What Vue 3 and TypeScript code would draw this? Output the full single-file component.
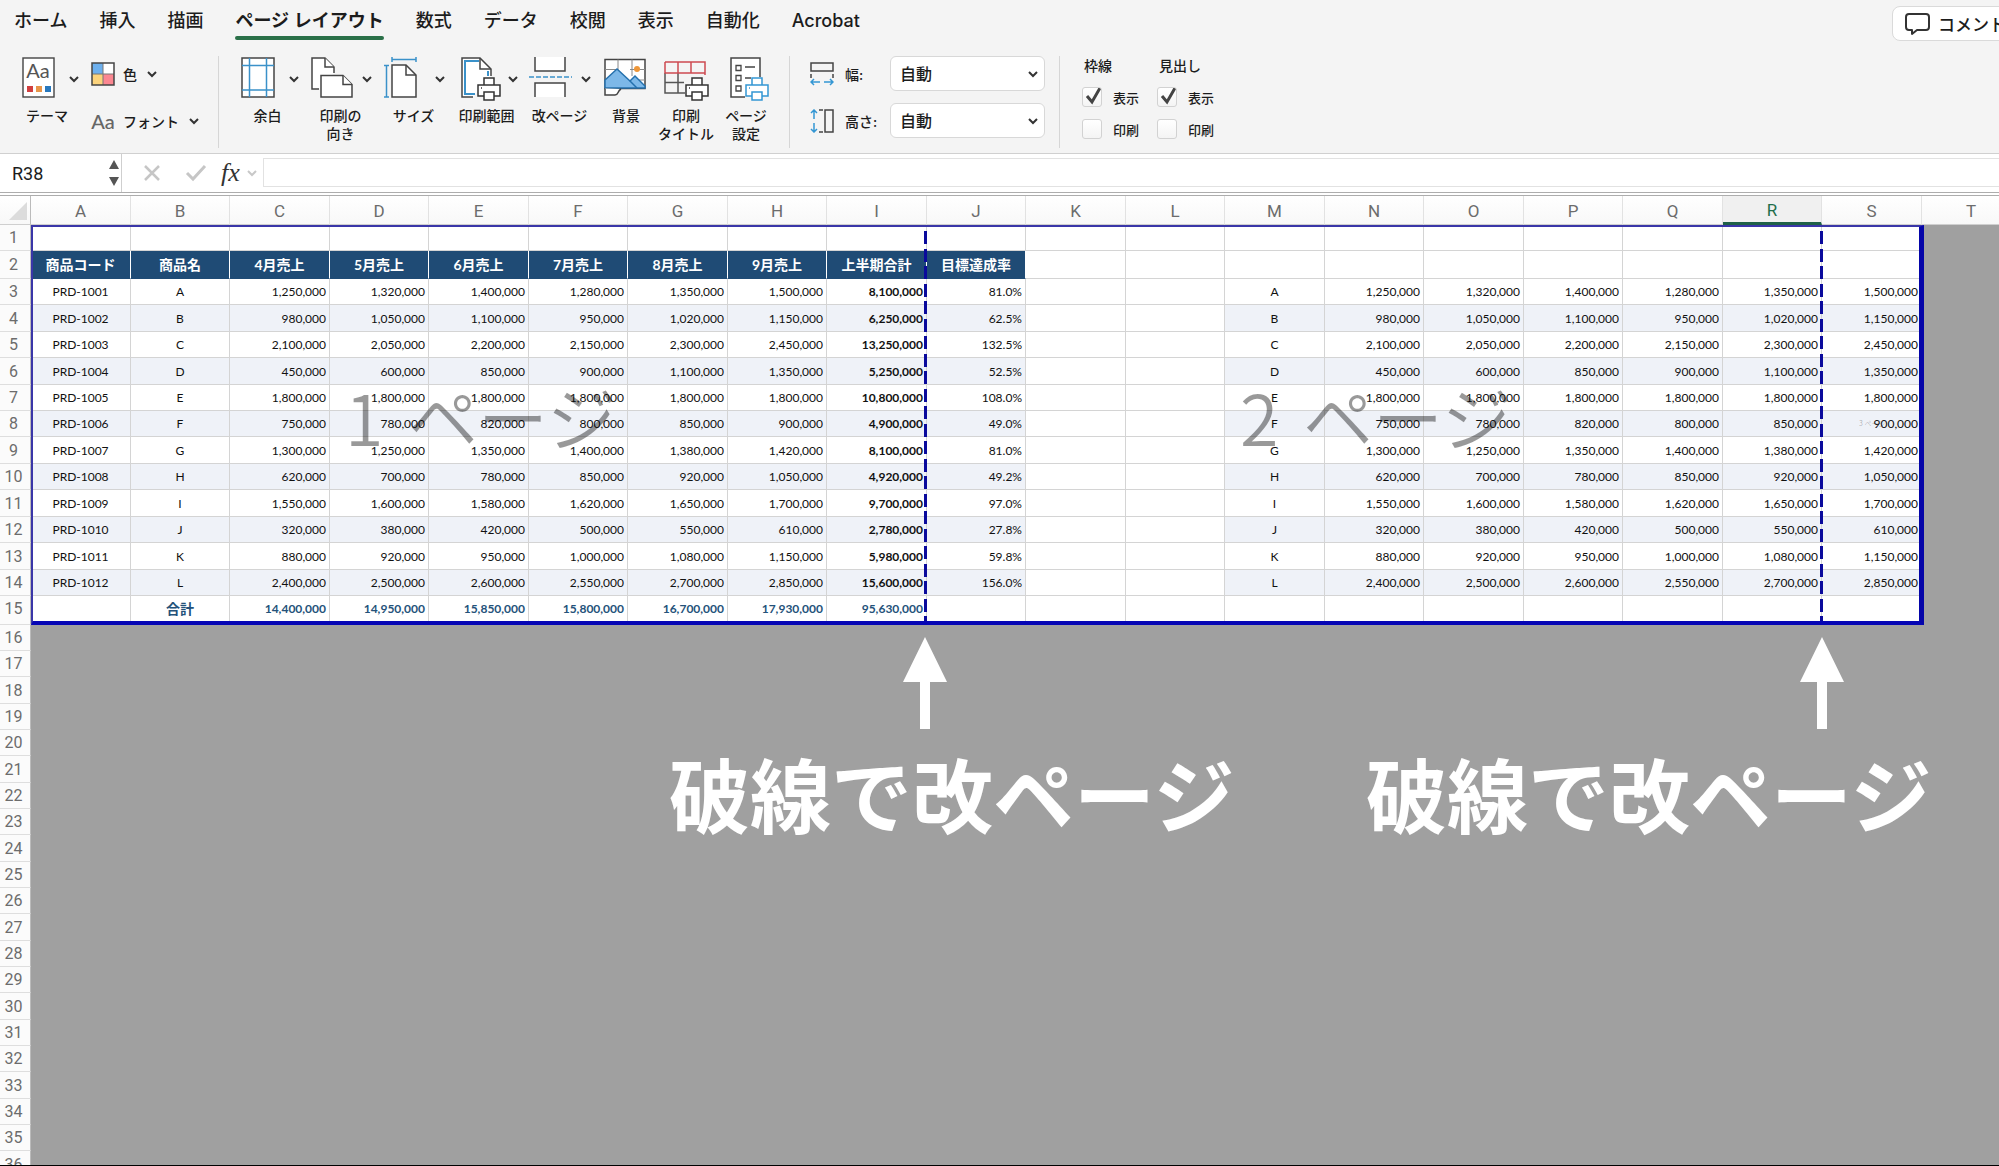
<script setup lang="ts">
import { ref } from 'vue'

interface Product {
  code: string
  name: string
  months: number[]
  total: number
  rate: string
}

interface Cell {
  text: string
  kind: string
}

const tabs = ['ホーム', '挿入', '描画', 'ページ レイアウト', '数式', 'データ', '校閲', '表示', '自動化', 'Acrobat']
const activeTab = ref('ページ レイアウト')

const columns = 'ABCDEFGHIJKLMNOPQRST'.split('')
const selectedColumn = 'R'

const headings = ['商品コード', '商品名', '4月売上', '5月売上', '6月売上', '7月売上', '8月売上', '9月売上', '上半期合計', '目標達成率']

// Monthly sales in units of 10,000
const source: [string, number[], number, string][] = [
  ['A', [125, 132, 140, 128, 135, 150], 810, '81.0%'],
  ['B', [98, 105, 110, 95, 102, 115], 625, '62.5%'],
  ['C', [210, 205, 220, 215, 230, 245], 1325, '132.5%'],
  ['D', [45, 60, 85, 90, 110, 135], 525, '52.5%'],
  ['E', [180, 180, 180, 180, 180, 180], 1080, '108.0%'],
  ['F', [75, 78, 82, 80, 85, 90], 490, '49.0%'],
  ['G', [130, 125, 135, 140, 138, 142], 810, '81.0%'],
  ['H', [62, 70, 78, 85, 92, 105], 492, '49.2%'],
  ['I', [155, 160, 158, 162, 165, 170], 970, '97.0%'],
  ['J', [32, 38, 42, 50, 55, 61], 278, '27.8%'],
  ['K', [88, 92, 95, 100, 108, 115], 598, '59.8%'],
  ['L', [240, 250, 260, 255, 270, 285], 1560, '156.0%'],
]

const products: Product[] = source.map(([name, months, total, rate], i) => ({
  code: `PRD-${1001 + i}`,
  name,
  months,
  total,
  rate,
}))

const totals = [1440, 1495, 1585, 1580, 1670, 1793, 9563]

const yen = (n: number): string => (n * 10000).toLocaleString('en-US')
const blank = (count: number): Cell[] => Array.from({ length: count }, () => ({ text: '', kind: '' }))

function productCells(p: Product, banded: boolean): Cell[] {
  const band = banded ? ' band' : ''
  const months = p.months.map((m) => ({ text: yen(m), kind: 'num' + band }))
  return [
    { text: p.code, kind: 'mid' + band },
    { text: p.name, kind: 'mid' + band },
    ...months,
    { text: yen(p.total), kind: 'num strong' + band },
    { text: p.rate, kind: 'num' + band },
    ...blank(2),
    { text: p.name, kind: 'mid' + band },
    ...months,
  ]
}

const printRows: Cell[][] = [
  blank(19),
  [...headings.map((text) => ({ text, kind: 'heading' })), ...blank(9)],
  ...products.map((p, i) => productCells(p, i % 2 === 1)),
  [
    ...blank(1),
    { text: '合計', kind: 'mid sum' },
    ...totals.map((t) => ({ text: yen(t), kind: 'num sum' })),
    ...blank(10),
  ],
]

const outerRows = Array.from({ length: 21 }, (_, i) => i + 16)

const widthMode = ref('自動')
const heightMode = ref('自動')
const gridView = ref(true)
const gridPrint = ref(false)
const headView = ref(true)
const headPrint = ref(false)
const formula = ref('')
</script>

<template>
  <div class="app">
    <header class="ribbon">
      <nav class="tabs">
        <button
          v-for="tab in tabs"
          :key="tab"
          type="button"
          class="tab"
          :class="{ active: tab === activeTab }"
          @click="activeTab = tab"
        >{{ tab }}</button>
        <button type="button" class="comment">
          <svg width="26" height="24" viewBox="0 0 26 24" fill="none" stroke="#333" stroke-width="2" stroke-linejoin="round">
            <path d="M4 2h17a3 3 0 0 1 3 3v10a3 3 0 0 1-3 3h-9l-5 4v-4H4a3 3 0 0 1-3-3V5a3 3 0 0 1 3-3z" />
          </svg>
          コメント
        </button>
      </nav>

      <div class="tools">
        <section class="group themes">
          <button type="button" class="theme">
            <span class="pic">
              <svg width="34" height="46" viewBox="0 0 34 46">
                <rect x="2" y="2" width="31" height="39" fill="#fff" stroke="#444" stroke-width="1.4" />
                <text x="17" y="22" text-anchor="middle" font-family="Lato, sans-serif" font-size="20" fill="#555">Aa</text>
                <rect x="6" y="30" width="6" height="6" fill="#d13f3f" />
                <rect x="15" y="30" width="6" height="6" fill="#e8964a" />
                <rect x="24" y="30" width="6" height="6" fill="#2878bd" />
              </svg>
              <svg class="chev" width="14" height="14" viewBox="0 0 14 14"><path d="M3 5l4 4 4-4" /></svg>
            </span>
            <span class="caption">テーマ</span>
          </button>
          <div class="stack">
            <button type="button" class="inline">
              <svg width="24" height="24" viewBox="0 0 24 24">
                <rect x="1" y="1" width="11" height="11" fill="#6db0ee" />
                <rect x="12" y="1" width="11" height="11" fill="#fff" />
                <rect x="1" y="12" width="11" height="11" fill="#fbd37c" />
                <rect x="12" y="12" width="11" height="11" fill="#fb8791" />
                <path d="M12 1v22M1 12h22" stroke="#777" />
                <rect x="1" y="1" width="22" height="22" fill="none" stroke="#444" stroke-width="1.5" />
              </svg>
              <span>色</span>
              <svg class="chev" width="14" height="14" viewBox="0 0 14 14"><path d="M3 5l4 4 4-4" /></svg>
            </button>
            <button type="button" class="inline">
              <span class="aa">Aa</span>
              <span>フォント</span>
              <svg class="chev" width="14" height="14" viewBox="0 0 14 14"><path d="M3 5l4 4 4-4" /></svg>
            </button>
          </div>
        </section>

        <section class="group page">
          <button type="button" class="tool">
            <span class="pic">
              <svg width="48" height="46" viewBox="0 0 48 46" fill="none">
                <rect x="8" y="2" width="32" height="39" fill="#fff" stroke="#444" stroke-width="1.5" />
                <path d="M15.500 2v39M32.500 2v39M8 9.500h32M8 34h32" stroke="#3a91c9" stroke-width="1.500" />
              </svg>
              <svg class="chev" width="14" height="14" viewBox="0 0 14 14"><path d="M3 5l4 4 4-4" /></svg>
            </span>
            <span class="caption">余白</span>
          </button>
          <button type="button" class="tool">
            <span class="pic">
              <svg width="48" height="46" viewBox="0 0 48 46" fill="#fff" stroke="#444" stroke-width="1.5">
                <path d="M12 33H5V2h13l9 9v6" />
                <path d="M18 2v9h9" />
                <path d="M14 19.500h22l9 9V41H14z" />
                <path d="M36 19.500v9h9" />
              </svg>
              <svg class="chev" width="14" height="14" viewBox="0 0 14 14"><path d="M3 5l4 4 4-4" /></svg>
            </span>
            <span class="caption">印刷の<br>向き</span>
          </button>
          <button type="button" class="tool">
            <span class="pic">
              <svg width="48" height="46" viewBox="0 0 48 46" fill="none" stroke-width="1.5">
                <path d="M12 9h14l10 10v22H12z" fill="#fff" stroke="#444" />
                <path d="M26 9v10h10" stroke="#444" />
                <path d="M12 1v5M36 1v5M12 3.500h24M4 9.500h5M4 41h5M6.500 9.500V41" stroke="#3a91c9" />
              </svg>
              <svg class="chev" width="14" height="14" viewBox="0 0 14 14"><path d="M3 5l4 4 4-4" /></svg>
            </span>
            <span class="caption">サイズ</span>
          </button>
          <button type="button" class="tool">
            <span class="pic">
              <svg width="48" height="46" viewBox="0 0 48 46" fill="none" stroke-width="1.5">
                <path d="M20 41H9V2h18l11 11v7" fill="#fff" stroke="#444" />
                <path d="M22 38H12V5h14M35 15v5" stroke="#3a91c9" stroke-width="2" />
                <path d="M27 2v11h11" stroke="#444" />
                <g fill="#fff" stroke="#333">
                  <path d="M31 29v-7h10v7M25 29h22v11H25z" />
                  <path d="M31 36h10v8H31z" />
                </g>
                <path d="M28 32h1" stroke="#333" />
              </svg>
              <svg class="chev" width="14" height="14" viewBox="0 0 14 14"><path d="M3 5l4 4 4-4" /></svg>
            </span>
            <span class="caption">印刷範囲</span>
          </button>
          <button type="button" class="tool">
            <span class="pic">
              <svg width="48" height="46" viewBox="0 0 48 46" fill="#fff" stroke="#444" stroke-width="1.5">
                <path d="M9 1v14h30V1M9 41V27h30v14" />
                <path d="M3 21h43" stroke="#3a91c9" stroke-dasharray="5 2" />
              </svg>
              <svg class="chev" width="14" height="14" viewBox="0 0 14 14"><path d="M3 5l4 4 4-4" /></svg>
            </span>
            <span class="caption">改ページ</span>
          </button>
          <button type="button" class="tool narrow">
            <span class="pic">
              <svg width="46" height="46" viewBox="0 0 46 46" fill="none" stroke="#444" stroke-width="1.5">
                <path d="M2 3.500h40v29H2z" fill="#fff" />
                <path d="M15 3.500V15M29 3.500V20M2 13.500h13M27 13.500h15M2 24h7M36 24h6" stroke="#888" stroke-width="1" />
                <circle cx="34" cy="13" r="3" fill="#ee9638" stroke="none" />
                <path d="M2 32V24l12-11 13 12 5-5 10 10v2z" fill="#7db8e8" stroke="#2470ad" />
                <path d="M27 25l7 7" stroke="#2470ad" />
                <path d="M2 32.500V39h10c4 0 2-4 6-6" fill="#fff" />
              </svg>
            </span>
            <span class="caption">背景</span>
          </button>
          <button type="button" class="tool narrow">
            <span class="pic">
              <svg width="46" height="46" viewBox="0 0 46 46" fill="none" stroke-width="1.5">
                <path d="M2 17v20h20M2 26.500h19M15 17v20" stroke="#555" />
                <path d="M2 6h40v13M2 6v11h40M15 6v11M28 6v11" stroke="#cd4a50" />
                <g fill="#fff" stroke="#333">
                  <path d="M29 29v-7h10v7M23 29h22v11H23z" />
                  <path d="M29 36h10v8H29z" />
                </g>
                <path d="M26 32h1" stroke="#333" />
              </svg>
            </span>
            <span class="caption">印刷<br>タイトル</span>
          </button>
          <button type="button" class="tool narrow">
            <span class="pic">
              <svg width="48" height="46" viewBox="0 0 48 46" fill="none" stroke="#444" stroke-width="1.5">
                <path d="M23 41H9V2h29v19" fill="#fff" />
                <path d="M14 9.500h5v5h-5zM14 19.500h5v5h-5zM14 30h5v5h-5z" stroke-width="1.3" />
                <path d="M23 11h10M23 22h6" stroke-width="1.3" />
                <g fill="#fff" stroke="#3396d3">
                  <path d="M30 29v-7h10v7M24 29h22v11H24z" />
                  <path d="M30 36h10v8H30z" />
                </g>
                <path d="M27 32h1" stroke="#3396d3" />
              </svg>
            </span>
            <span class="caption">ページ<br>設定</span>
          </button>
        </section>

        <section class="group scale">
          <div class="scale-row">
            <svg width="24" height="24" viewBox="0 0 24 24" fill="none" stroke="#444" stroke-width="1.500">
              <path d="M1 1h22v8H1zM1 12v4M23 12v4" />
              <path d="M10 20H1m3-3l-3 3 3 3M14 20h9m-3-3l3 3-3 3" stroke="#3396d3" />
            </svg>
            <label for="fit-width">幅:</label>
            <select id="fit-width" v-model="widthMode"><option>自動</option></select>
          </div>
          <div class="scale-row">
            <svg width="24" height="24" viewBox="0 0 24 24" fill="none" stroke="#444" stroke-width="1.500">
              <path d="M15 1h8v22h-8zM9 1h4M9 23h4" />
              <path d="M4 10V1M1 4l3-3 3 3M4 14v9m-3-3l3 3 3-3" stroke="#3396d3" />
            </svg>
            <label for="fit-height">高さ:</label>
            <select id="fit-height" v-model="heightMode"><option>自動</option></select>
          </div>
        </section>

        <section class="group options">
          <fieldset>
            <legend>枠線</legend>
            <label><input v-model="gridView" type="checkbox">表示</label>
            <label><input v-model="gridPrint" type="checkbox">印刷</label>
          </fieldset>
          <fieldset>
            <legend>見出し</legend>
            <label><input v-model="headView" type="checkbox">表示</label>
            <label><input v-model="headPrint" type="checkbox">印刷</label>
          </fieldset>
        </section>
      </div>
    </header>

    <div class="formula-bar">
      <div class="name-box">
        <input type="text" value="R38" aria-label="名前ボックス">
        <svg width="12" height="28" viewBox="0 0 12 28" fill="#555"><path d="M6 1l5 9H1zM6 27l5-9H1z" /></svg>
      </div>
      <div class="entry-tools">
        <button type="button" aria-label="キャンセル">
          <svg width="18" height="18" viewBox="0 0 18 18" fill="none" stroke="#c6c6c6" stroke-width="2.500"><path d="M2 2l14 14M16 2L2 16" /></svg>
        </button>
        <button type="button" aria-label="入力">
          <svg width="22" height="18" viewBox="0 0 22 18" fill="none" stroke="#c6c6c6" stroke-width="3"><path d="M2 9l6 6L20 2" /></svg>
        </button>
        <button type="button" class="fx">fx
          <svg class="chev" width="14" height="14" viewBox="0 0 14 14"><path d="M3 5l4 4 4-4" /></svg>
        </button>
      </div>
      <input v-model="formula" class="formula" type="text" aria-label="数式バー">
    </div>

    <main class="sheet">
      <table>
        <colgroup>
          <col class="col-head">
          <col v-for="c in columns" :key="c" class="col">
        </colgroup>
        <thead>
          <tr>
            <th class="corner">
              <svg width="18" height="18" viewBox="0 0 18 18"><path d="M18 0v18H0z" fill="#dcdcdc" /></svg>
            </th>
            <th v-for="c in columns" :key="c" scope="col" :class="{ selected: c === selectedColumn }">{{ c }}</th>
          </tr>
        </thead>
        <tbody class="inside">
          <tr v-for="(cells, r) in printRows" :key="r">
            <th scope="row">{{ r + 1 }}</th>
            <td v-for="(cell, i) in cells" :key="i" :class="cell.kind">{{ cell.text }}</td>
            <td class="outside"></td>
          </tr>
        </tbody>
        <tbody class="beyond">
          <tr v-for="n in outerRows" :key="n">
            <th scope="row">{{ n }}</th>
            <td class="outside" colspan="20"></td>
          </tr>
        </tbody>
      </table>

      <div class="print-area">
        <span class="watermark first">1 <span class="unit">ページ</span></span>
        <span class="watermark second">2 <span class="unit">ページ</span></span>
        <span class="watermark third">3 ページ</span>
        <i class="page-break first"></i>
        <i class="page-break second"></i>
      </div>

      <svg class="arrow first" width="46" height="92" viewBox="0 0 46 92" fill="#fff"><path d="M23 0l22 45H28v47h-10V45H1z" /></svg>
      <svg class="arrow second" width="46" height="92" viewBox="0 0 46 92" fill="#fff"><path d="M23 0l22 45H28v47h-10V45H1z" /></svg>
      <p class="note first">破線で改ページ</p>
      <p class="note second">破線で改ページ</p>
    </main>
  </div>
</template>

<style>
body {
  margin: 0;
  overflow: hidden;
}
</style>

<style scoped>
.app {
  display: flex;
  flex-direction: column;
  box-sizing: border-box;
  height: 100vh;
  overflow: hidden;
  border-bottom: 1px solid #000;
  background: #a0a0a0;
  color: #1c1c1c;
  font-family: Inter, "Noto Sans CJK JP", sans-serif;
  font-size: 14px;
}

button,
input,
select {
  margin: 0;
  padding: 0;
  border: 0;
  background: none;
  color: inherit;
  font: inherit;
}

svg {
  display: block;
  flex: none;
}

.chev {
  fill: none;
  stroke: #333;
  stroke-width: 2;
}

/* Ribbon */
.ribbon {
  flex: none;
  height: 153px;
  border-bottom: 1px solid #d0d0d0;
  background: #f4f4f4;
}

.tabs {
  display: flex;
  align-items: flex-start;
  gap: 32px;
  height: 56px;
  padding-left: 14px;
  overflow: hidden;
}

.tab {
  flex: none;
  padding-top: 6px;
  font-size: 18px;
  font-weight: 500;
  line-height: 30px;
  white-space: nowrap;
}

.tab.active {
  font-weight: 600;
}

.tab.active::after {
  display: block;
  height: 4px;
  border-radius: 2px;
  background: #2a7048;
  content: "";
}

.comment {
  display: flex;
  flex: none;
  align-items: center;
  gap: 7px;
  box-sizing: border-box;
  width: 140px;
  height: 35px;
  margin: 6px -33px 0 auto;
  padding-left: 12px;
  border: 1px solid #dadada;
  border-radius: 8px;
  background: #fff;
  font-size: 17px;
  font-weight: 500;
  white-space: nowrap;
}

.tools {
  display: flex;
  height: 92px;
}

.group {
  display: flex;
  flex: none;
  box-sizing: border-box;
  border-right: 1px solid #d6d6d6;
}

.group:last-child {
  border-right: 0;
}

.themes {
  width: 219px;
}

.theme,
.tool {
  display: flex;
  flex-direction: column;
  align-items: center;
}

.theme {
  align-items: flex-start;
  width: 91px;
  padding-left: 21px;
}

.theme .pic {
  gap: 12px;
}

.theme .caption {
  padding-left: 5px;
}

.pic {
  display: flex;
  align-items: center;
  gap: 5px;
}

.caption {
  margin-top: 5px;
  font-weight: 500;
  line-height: 18px;
  white-space: nowrap;
}

.stack {
  display: flex;
  flex-direction: column;
  gap: 23px;
  padding-top: 6px;
}

.inline {
  display: flex;
  align-items: center;
  gap: 8px;
  height: 24px;
  font-weight: 500;
}

.aa {
  width: 24px;
  color: #666;
  font-family: Lato, sans-serif;
  font-size: 20px;
}

.page {
  width: 571px;
  padding-left: 12px;
}

.tool {
  width: 73px;
}

.tool.narrow {
  width: 60px;
}

.scale {
  flex-direction: column;
  gap: 12px;
  width: 270px;
  padding-left: 20px;
}

.scale-row {
  display: flex;
  align-items: center;
  height: 35px;
}

.scale-row label {
  width: 45px;
  padding-left: 11px;
  font-weight: 500;
}

.scale-row select {
  box-sizing: border-box;
  width: 155px;
  height: 35px;
  padding-left: 9px;
  border: 1px solid #d8d8d8;
  border-radius: 6px;
  appearance: none;
  background: #fff url("data:image/svg+xml,%3Csvg xmlns='http://www.w3.org/2000/svg' width='14' height='14' fill='none' stroke='%23333' stroke-width='2'%3E%3Cpath d='M3 5l4 4 4-4'/%3E%3C/svg%3E") no-repeat right 4px center;
  font-size: 16px;
  font-weight: 500;
}

.options {
  padding-left: 22px;
}

fieldset {
  display: flex;
  flex-direction: column;
  gap: 12px;
  width: 75px;
  min-width: 0;
  margin: 0;
  padding: 0;
  border: 0;
  font-size: 13px;
  font-weight: 500;
}

legend {
  height: 31px;
  padding: 0 0 0 2px;
  font-size: 14px;
  line-height: 20px;
}

fieldset label {
  display: flex;
  align-items: center;
  gap: 11px;
  height: 20px;
}

fieldset input {
  box-sizing: border-box;
  width: 20px;
  height: 20px;
  border: 1px solid #d2d2d2;
  border-radius: 3px;
  appearance: none;
  background: linear-gradient(#fff, #f4f4f4);
}

fieldset input:checked {
  background: url("data:image/svg+xml,%3Csvg xmlns='http://www.w3.org/2000/svg' width='18' height='18' fill='none' stroke='%23444' stroke-width='3'%3E%3Cpath d='M4 8l5 6L17 0'/%3E%3C/svg%3E") no-repeat center, linear-gradient(#fff, #f4f4f4);
}

/* Formula bar */
.formula-bar {
  display: flex;
  flex: none;
  box-sizing: border-box;
  height: 42px;
  border-bottom: 4px double #adadad;
  background: #fff;
}

.name-box {
  display: flex;
  align-items: center;
  box-sizing: border-box;
  width: 122px;
  padding: 0 1px 0 12px;
  border-right: 1px solid #cfcfcf;
}

.name-box input {
  flex: 1;
  min-width: 0;
  font-family: Roboto, sans-serif;
  font-size: 18px;
}

.entry-tools {
  display: flex;
  align-items: center;
  gap: 24px;
  width: 141px;
  padding-left: 21px;
  box-sizing: border-box;
}

.entry-tools .fx {
  display: flex;
  align-items: center;
  gap: 5px;
  margin-left: -10px;
  color: #333;
  font-family: "Liberation Serif", serif;
  font-size: 26px;
  font-style: italic;
}

.fx .chev {
  stroke: #c8c8c8;
}

.formula {
  flex: 1;
  height: 27px;
  margin-top: 4px;
  border: 1px solid #e2e2e2;
  border-right: 0;
}

/* Worksheet */
.sheet {
  position: relative;
  flex: 1;
  min-height: 0;
  overflow: hidden;
}

table {
  width: 2021px;
  border-spacing: 0;
  table-layout: fixed;
}

.col-head {
  width: 31px;
}

.col {
  width: 99px;
}

.col:nth-child(even) {
  width: 100px;
}

th,
td {
  box-sizing: border-box;
  padding: 1px 0 0;
  overflow: hidden;
  white-space: nowrap;
}

th {
  color: #6c6c6c;
  font-family: Roboto, sans-serif;
  font-size: 17px;
  font-weight: 400;
  line-height: 20px;
}

thead th {
  height: 29px;
  border-right: 1px solid #e2e2e2;
  border-bottom: 1px solid #cfcfcf;
  background: linear-gradient(#fff, #f8f8f8);
}

thead .corner {
  padding-left: 9px;
  border-right-color: #bbb;
}

thead .selected {
  border-bottom: 3px solid #1f6048;
  background: #f0f0f0;
  color: #1f6e4b;
  line-height: 18px;
}

tbody th {
  padding-right: 3px;
  border-right: 1px solid #bbb;
  border-bottom: 1px solid #dedede;
  background: #fbfbfb;
  font-size: 16px;
}

tbody tr {
  height: 26px;
}

/* Row pitch alternates so that seven rows take 185px */
.inside tr:nth-child(7n + 2),
.inside tr:nth-child(7n + 4),
.inside tr:nth-child(7n + 6) {
  height: 27px;
}

.inside tr:nth-child(2) {
  height: 28px;
}

/* The last printed row also holds the 4px page border */
.inside tr:last-child {
  height: 29px;
}

.inside tr:last-child > * {
  padding-bottom: 3px;
}

.beyond tr:nth-child(3n) {
  height: 27px;
}

td {
  border-right: 1px solid #d4d4d4;
  border-bottom: 1px solid #d4d4d4;
  background: #fff;
  color: #111;
  font-family: Lato, "Noto Sans CJK JP", sans-serif;
  font-size: 12px;
  line-height: 18px;
}

td.mid {
  text-align: center;
}

td.num {
  padding-right: 3px;
  text-align: right;
}

td.strong {
  font-weight: 700;
}

td.band {
  background: #eff2f8;
}

td.sum {
  color: #24527a;
  font-weight: 700;
}

td.mid.sum {
  font-size: 14px;
}

td.heading {
  padding-top: 0;
  border-right-color: #fff;
  border-bottom-color: #1f4b75;
  background: #1f4b75;
  color: #fff;
  font-size: 14px;
  font-weight: 700;
  text-align: center;
}

td.outside {
  border: 0;
  background: #a0a0a0;
}

/* Page break preview overlays */
.print-area {
  position: absolute;
  top: 29px;
  left: 31px;
  box-sizing: border-box;
  width: 1893px;
  height: 400px;
  border: 2px solid #3a36a8;
  border-right: 5px solid #0505a8;
  border-bottom: 4px solid #0505b4;
}

.watermark {
  position: absolute;
  color: rgba(0, 0, 0, 0.4);
  font-family: "Noto Sans CJK JP", sans-serif;
  font-size: 70px;
  font-weight: 350;
  line-height: 80px;
  white-space: nowrap;
}

.unit {
  margin-left: 9px;
}

.watermark.first {
  top: 149px;
  left: 312px;
}

.watermark.second {
  top: 149px;
  left: 1207px;
}

.watermark.third {
  top: 191px;
  left: 1826px;
  color: rgba(0, 0, 0, 0.3);
  font-size: 7px;
  line-height: 10px;
}

.page-break {
  position: absolute;
  top: 4px;
  bottom: 0;
  width: 3px;
  background: repeating-linear-gradient(#0a0a9c 0 13px, transparent 13px 18px, #0a0a9c 18px 31px, transparent 31px 35px);
}

.page-break.first {
  left: 891px;
}

.page-break.second {
  left: 1787px;
}

.arrow {
  position: absolute;
  top: 441px;
}

.arrow.first {
  left: 902px;
}

.arrow.second {
  left: 1799px;
}

.note {
  position: absolute;
  top: 536px;
  margin: 0;
  color: #fff;
  font-family: "Noto Sans CJK JP", sans-serif;
  font-size: 81px;
  font-weight: 700;
  line-height: 120px;
  white-space: nowrap;
}

.note.first {
  left: 669px;
}

.note.second {
  left: 1366px;
}
</style>
